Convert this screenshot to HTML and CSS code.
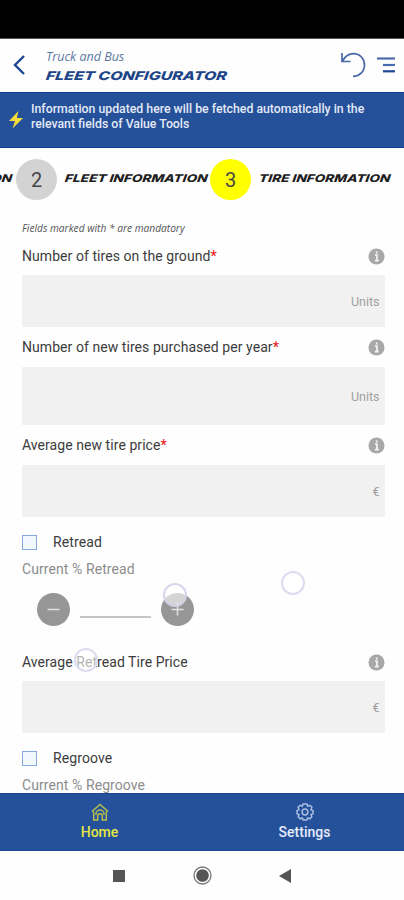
FILE: index.html
```html
<!DOCTYPE html>
<html lang="en">
<head>
<meta charset="utf-8">
<title>Fleet Configurator</title>
<link rel="stylesheet" href="styles.css">
</head>
<body>
<div class="phone">
  <div class="status"></div>
  <header class="header">
    <svg class="back" width="14" height="22" viewBox="0 0 14 22"><path d="M12 2 3 11l9 9" fill="none" stroke="#1d4792" stroke-width="2.4"/></svg>
    <div class="titles">
      <div class="brand"><span class="fit">Truck and Bus</span></div>
      <h1 class="title"><span class="fit">FLEET CONFIGURATOR</span></h1>
    </div>
    <svg class="undo" width="28" height="28" viewBox="0 0 28 28"><path d="M3 2v8.500h8.500M3.500 10C6 5.500 10 2.700 14.500 2.700c6.500 0 11 5 11 11.300 0 6.500-5 11.300-11.500 11.300" fill="none" stroke="#4668a8" stroke-width="1.700"/></svg>
    <svg class="menu" width="20" height="18" viewBox="0 0 20 18" fill="none" stroke-width="2.200"><path d="M1 2.500h18" stroke="#4a6baa"/><path d="M7 9h12" stroke="#4a6baa"/><path d="M7 15.300h12" stroke="#1d4792"/></svg>
  </header>
  <section class="banner">
    <svg width="16" height="20" viewBox="0 0 16 20"><path d="M10.500 1 1 11h6L4.500 18.500 15 8H8.800z" fill="#f5dc3c"/></svg>
    <p><span class="fit">Information updated here will be fetched automatically in the</span><br><span class="fit">relevant fields of Value Tools</span></p>
  </section>
  <nav class="steps">
    <span class="step-label prev"><span class="fit">ON</span></span>
    <span class="dot">2</span>
    <span class="step-label fleet"><span class="fit">FLEET INFORMATION</span></span>
    <span class="dot active">3</span>
    <span class="step-label tire"><span class="fit">TIRE INFORMATION</span></span>
  </nav>
  <main class="form">
    <p class="note"><span class="fit">Fields marked with * are mandatory</span></p>
    <div class="label"><span>Number of tires on the ground<b>*</b></span><svg class="info" viewBox="0 0 18 18"><circle cx="9" cy="9" r="8.500"/><path d="M7.500 7.600h2v6M7.200 13.300h4.200M9.200 3.600v2.200"/></svg></div>
    <div class="field"><span>Units</span></div>
    <div class="label second"><span>Number of new tires purchased per year<b>*</b></span><svg class="info" viewBox="0 0 18 18"><circle cx="9" cy="9" r="8.500"/><path d="M7.500 7.600h2v6M7.200 13.300h4.200M9.200 3.600v2.200"/></svg></div>
    <div class="field tall"><span>Units</span></div>
    <div class="label third"><span>Average new tire price<b>*</b></span><svg class="info" viewBox="0 0 18 18"><circle cx="9" cy="9" r="8.500"/><path d="M7.500 7.600h2v6M7.200 13.300h4.200M9.200 3.600v2.200"/></svg></div>
    <div class="field"><span>€</span></div>
    <div class="check"><i></i><span>Retread</span></div>
    <div class="sub">Current % Retread</div>
    <div class="stepper">
      <span class="round"><svg width="33" height="33" viewBox="0 0 33 33"><path d="M10.500 16.500h12"/></svg></span>
      <span class="rule"></span>
      <span class="round"><svg width="33" height="33" viewBox="0 0 33 33"><path d="M10.500 16.500h12M16.500 10.500v12"/></svg><span class="touch on-plus"></span></span>
      <span class="touch free"></span>
    </div>
    <div class="label fourth"><span>Average Retread Tire Price</span><span class="touch on-label"></span><svg class="info" viewBox="0 0 18 18"><circle cx="9" cy="9" r="8.500"/><path d="M7.500 7.600h2v6M7.200 13.300h4.200M9.200 3.600v2.200"/></svg></div>
    <div class="field"><span>€</span></div>
    <div class="check"><i></i><span>Regroove</span></div>
    <div class="sub">Current % Regroove</div>
  </main>
  <nav class="tabs">
    <div class="tab home"><svg width="18" height="18" viewBox="0 0 18 18"><path d="M1.500 8 9 1.500 16.500 8l-1.200 1.200V17h-4v-4a2.300 2.300 0 0 0-4.600 0v4h-4V9.200zM5 12v-1a4 4 0 0 1 8 0v1"/></svg><span>Home</span></div>
    <div class="tab settings"><svg width="18" height="18" viewBox="0 0 18 18"><path d="M7 1h4l.7 2.200 2.200-.9 2 2-.9 2.500L17 7.500v3.300l-2 .8.8 2.200-2 2-2.200-.8L10.800 17H7.200l-.8-2-2.200.8-2-2 .8-2.200-2-.8V7.500l2-.7-.9-2.500 2-2 2.200.9z"/><circle cx="9" cy="9" r="2.900"/></svg><span>Settings</span></div>
  </nav>
  <div class="system">
    <svg width="12" height="12" viewBox="0 0 12 12"><path d="M0 0h12v12H0z"/></svg>
    <svg width="19" height="19" viewBox="0 0 19 19"><circle cx="9.500" cy="9.500" r="8.500" fill="none" stroke="#777" stroke-width="1.300"/><circle cx="9.500" cy="9.500" r="6.300"/></svg>
    <svg width="12" height="14" viewBox="0 0 12 14"><path d="M0 7 12 0v14z"/></svg>
  </div>
</div>
</body>
</html>
```
FILE: styles.css
```css
* { box-sizing: border-box; }
body { margin: 0; font-family: Roboto, "Liberation Sans", sans-serif; color: #3c3c3c; background: #fff; }
p, h1 { margin: 0; }
svg { display: block; flex: none; }
.phone { width: 404px; height: 900px; overflow: hidden; display: flex; flex-direction: column; background: #fefefe; }
.phone > * { flex: none; }
.fit { display: inline-block; transform-origin: left center; white-space: nowrap; }

.status { height: 39px; background: #000; border-bottom: 1px solid #555; }
.header { height: 53px; display: flex; align-items: flex-start; padding: 0 7px 0 12px; }
.back { margin-top: 15px; }
.titles { width: 314px; margin-left: 20px; padding-top: 9px; }
.brand { font: italic 12.5px/18px "Open Sans", sans-serif; color: #5f789f; }
.title { font: italic 800 12px/20px Inter, sans-serif; color: #1d4588; }
.title .fit { transform: scaleX(1.33) skewX(-6deg); }
.undo { margin: 12px 0 0 -21px; }
.menu { margin: 17px 0 0 9px; }

.banner { height: 56px; display: flex; align-items: flex-start; padding: 9px 0 0 8px; background: #25509a; border-top: 1px solid #0c3c8c; border-bottom: 1px solid #0c3c8c; color: #e3eaf6; }
.banner svg { margin-top: 8px; }
.banner p { margin-left: 7px; font-size: 12px; line-height: 14.5px; font-weight: 500; }
.banner .fit { transform: scaleX(1.024); }

.steps { height: 63px; display: flex; align-items: center; overflow: hidden; }
.step-label { flex: none; font: italic 800 10.5px/14px Inter, sans-serif; color: #202020; margin-top: -1px; }
.prev { width: 16px; display: flex; justify-content: flex-end; padding-right: 4px; }
.prev .fit { transform: scaleX(1.3) skewX(-6deg); transform-origin: right center; }
.fleet { width: 145px; margin-left: 8px; }
.tire { width: 132px; margin-left: 8px; }
.fleet .fit, .tire .fit { transform: scaleX(1.295) skewX(-6deg); }
.dot { flex: none; width: 41px; height: 41px; border-radius: 50%; display: flex; align-items: center; justify-content: center; background: #d3d3d3; font-size: 20px; color: #454545; }
.dot.active { background: #ff0; }

.form { height: 582px; overflow: hidden; padding: 8px 19.500px 0 22px; }
.note { height: 18px; font: italic 10px/18px "Open Sans", sans-serif; color: #555; white-space: nowrap; }
.note .fit { transform: scaleX(1.018); }
.label { position: relative; height: 38px; display: flex; justify-content: space-between; align-items: center; font-size: 14px; letter-spacing: .06px; white-space: nowrap; }
.label b { color: #e81e25; font-weight: 500; }
.info { width: 17px; height: 17px; fill: #a8a8a8; }
.info path { fill: none; stroke: #f4f4f4; stroke-width: 1.800; }
.second { height: 40px; }
.third { height: 40px; }
.field { height: 52px; display: flex; align-items: center; justify-content: flex-end; padding-right: 5px; background: #f1f1f1; color: #a0a0a0; font-size: 12.5px; }
.tall { height: 58px; }
.check { height: 50px; display: flex; align-items: center; gap: 16px; font-size: 14px; letter-spacing: .1px; }
.check i { width: 15px; height: 15px; border: 1px solid #87a9df; background: #f1f8ff; }
.sub { height: 2px; line-height: 4px; font-size: 14px; letter-spacing: .08px; color: #8d8d8d; }
.stepper { position: relative; height: 74px; display: flex; align-items: center; padding: 7px 0 0 15px; }
.round { position: relative; width: 33px; height: 33px; border-radius: 50%; background: #969696; }
.round path { fill: none; stroke: #e2e2e2; stroke-width: 1.500; }
.rule { width: 71px; height: 2px; margin: 15px 9.5px 0 10px; background: #c5c5c5; }
.touch { position: absolute; width: 24px; height: 24px; border: 2px solid #dcdcf0; border-radius: 50%; background: rgba(255,255,255,.6); }
.on-plus { left: 2px; top: -10px; border-color: rgba(205,205,232,.8); }
.free { left: 259px; top: 2px; }
.on-label { left: 52px; top: 5px; }

.tabs { height: 58px; display: flex; overflow: hidden; background: #25509a; border-top: 1px solid #174693; border-bottom: 1px solid #174693; color: #e6edfa; font-size: 14px; font-weight: 500; }
.tab { flex: none; width: 211px; display: flex; flex-direction: column; align-items: center; padding-top: 9px; line-height: 20px; }
.tab span { margin-top: 1px; }
.tab svg { fill: none; stroke: #a8bddf; stroke-width: 1.500; }
.tab.home { width: 199px; color: #e4e743; }
.home svg { stroke: #b6be51; }
.system { height: 49px; display: flex; align-items: center; padding-left: 113px; fill: #555; }
.system svg:nth-child(2) { margin-left: 68px; }
.system svg:nth-child(3) { margin-left: 67px; }
```
